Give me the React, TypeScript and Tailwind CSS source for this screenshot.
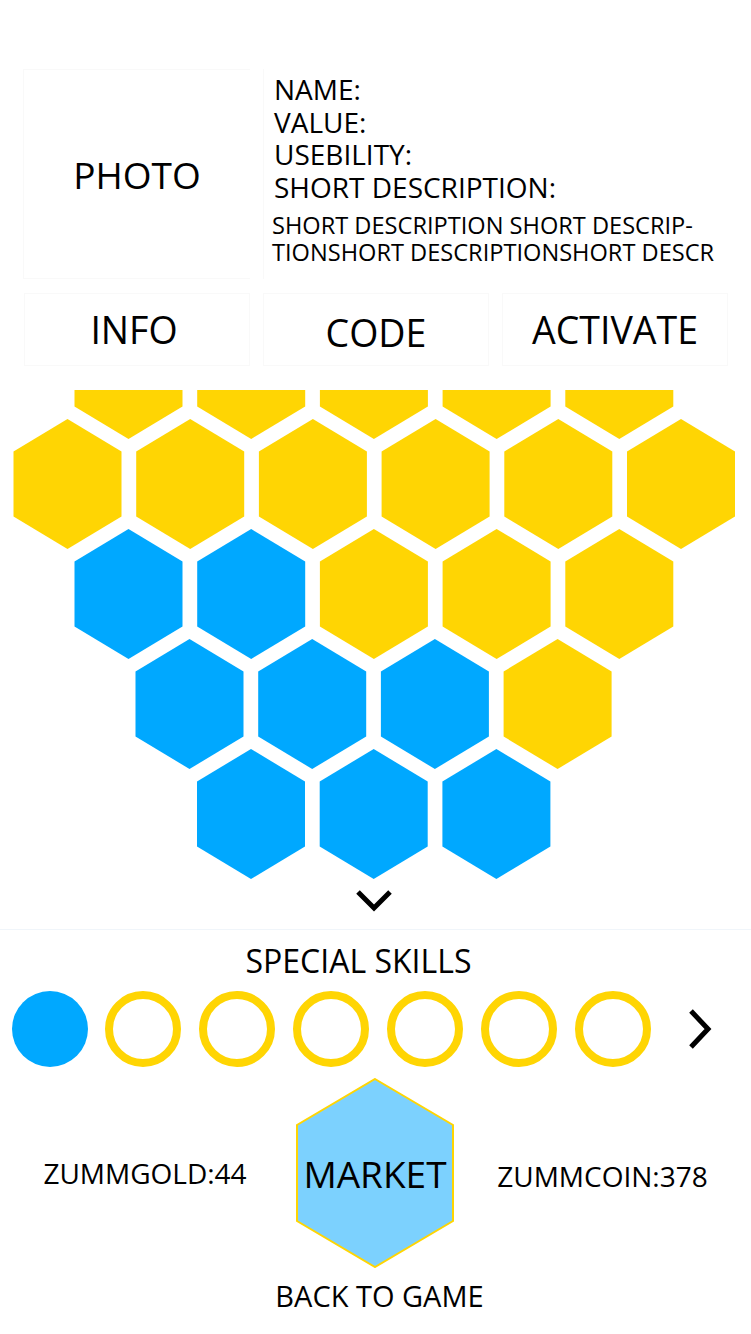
import React from 'react';

const YELLOW = '#FFD503';
const BLUE = '#00A8FF';

type Cell = { x: number; y: number; blue?: boolean };

const PITCH_X = 122.7;
const rowY = [-16, 94, 204, 314, 424];

// honeycomb cells, centre coordinates inside the svg
const cells: Cell[] = [
  ...[0, 1, 2, 3, 4].map((i) => ({ x: 128.5 + PITCH_X * i, y: rowY[0] })),
  ...[0, 1, 2, 3, 4, 5].map((i) => ({ x: 67.5 + PITCH_X * i, y: rowY[1] })),
  ...[0, 1, 2, 3, 4].map((i) => ({ x: 128.5 + PITCH_X * i, y: rowY[2], blue: i < 2 })),
  ...[0, 1, 2, 3].map((i) => ({ x: 189.5 + PITCH_X * i, y: rowY[3], blue: i < 3 })),
  ...[0, 1, 2].map((i) => ({ x: 251 + PITCH_X * i, y: rowY[4], blue: true })),
];

const hexPoints = (cx: number, cy: number) =>
  [
    [cx, cy - 65],
    [cx + 54, cy - 32.5],
    [cx + 54, cy + 32.5],
    [cx, cy + 65],
    [cx - 54, cy + 32.5],
    [cx - 54, cy - 32.5],
  ]
    .map((p) => p.join(','))
    .join(' ');

const HexGrid: React.FC = () => (
  <svg width="751" height="489" viewBox="0 0 751 489" className="block">
    {cells.map((c, i) => (
      <polygon key={i} points={hexPoints(c.x, c.y)} fill={c.blue ? BLUE : YELLOW} />
    ))}
  </svg>
);

const App: React.FC = () => {
  return (
    <div className="w-[751px] h-[1334px] bg-white text-black font-['Open_Sans',sans-serif] overflow-hidden pt-[69px]">
      {/* item card */}
      <div className="flex h-[210px]">
        <div className="ml-[23px] w-[227px] h-full flex items-center justify-center border border-[#f9f9f9] border-r-0">
          <span className="text-[37px] leading-none">PHOTO</span>
        </div>
        <div className="ml-[13px] flex-1 h-full border-l border-[#f9f9f9] pl-[10px] pt-[4px] overflow-hidden whitespace-nowrap">
          <div className="text-[28px] leading-[32.5px]">NAME:</div>
          <div className="text-[28px] leading-[32.5px]">VALUE:</div>
          <div className="text-[28px] leading-[32.5px]">USEBILITY:</div>
          <div className="text-[28px] leading-[32.5px]">SHORT DESCRIPTION:</div>
          <div className="mt-[9px] -ml-[2px] text-[23.6px] leading-[27px]">
            <div>SHORT DESCRIPTION SHORT DESCRIP-</div>
            <div>TIONSHORT DESCRIPTIONSHORT DESCR</div>
          </div>
        </div>
      </div>

      {/* tabs */}
      <div className="mt-[14px] h-[73px] flex gap-[13px] pl-[24px]">
        <div className="w-[226px] h-full flex items-center justify-center border border-[#f9f9f9] pr-[6px]">
          <span className="text-[37.5px] leading-none">INFO</span>
        </div>
        <div className="w-[226px] h-full flex items-center justify-center border border-[#f9f9f9] pt-[7px]">
          <span className="text-[37.5px] leading-none">CODE</span>
        </div>
        <div className="w-[226px] h-full flex items-center justify-center border border-[#f9f9f9]">
          <span className="text-[37.5px] leading-none">ACTIVATE</span>
        </div>
      </div>

      {/* honeycomb */}
      <div className="mt-[24px]">
        <HexGrid />
      </div>

      <div className="h-[50px] flex justify-center pt-[8px] pr-[4px]">
        <svg width="40" height="28" viewBox="0 0 40 28">
          <polyline points="4,5 20,21 36,5" fill="none" stroke="#000" strokeWidth="5" />
        </svg>
      </div>

      <div className="border-t border-[#f0f5fa] pt-[11px]">
        <div className="text-center text-[32px] leading-[40px] pr-[34px]">SPECIAL SKILLS</div>
      </div>

      {/* skills */}
      <div className="mt-[10px] h-[76px] flex items-center pl-[12px]">
        <div className="w-[76px] h-[76px] rounded-full bg-[#00A8FF]" />
        <div className="ml-[17px] flex gap-[18px]">
          {[0, 1, 2, 3, 4, 5].map((i) => (
            <div key={i} className="w-[76px] h-[76px] rounded-full border-[8px] border-[#FFD503]" />
          ))}
        </div>
        <svg width="28" height="42" viewBox="0 0 28 42" className="ml-[35px]">
          <polyline points="5,3 22,21 5,39" fill="none" stroke="#000" strokeWidth="5" />
        </svg>
      </div>

      {/* currencies + market */}
      <div className="mt-[11px] h-[190px] flex items-center">
        <div className="w-[296px] text-center text-[28px] leading-none pr-[6px]">ZUMMGOLD:44</div>
        <div className="relative w-[158px] h-[190px]">
          <svg width="158" height="190" viewBox="0 0 158 190" className="block">
            <polygon points="79,1 157,47 157,143 79,189 1,143 1,47" fill="#7CD1FE" stroke={YELLOW} strokeWidth="2" />
          </svg>
          <span className="absolute inset-0 flex items-center justify-center text-[37px] leading-none">MARKET</span>
        </div>
        <div className="flex-1 text-center text-[28px] leading-none pt-[6px]">ZUMMCOIN:378</div>
      </div>

      <div className="mt-[11px] text-center text-[29px] leading-[34px] pl-[8px]">BACK TO GAME</div>
    </div>
  );
};

export default App;
